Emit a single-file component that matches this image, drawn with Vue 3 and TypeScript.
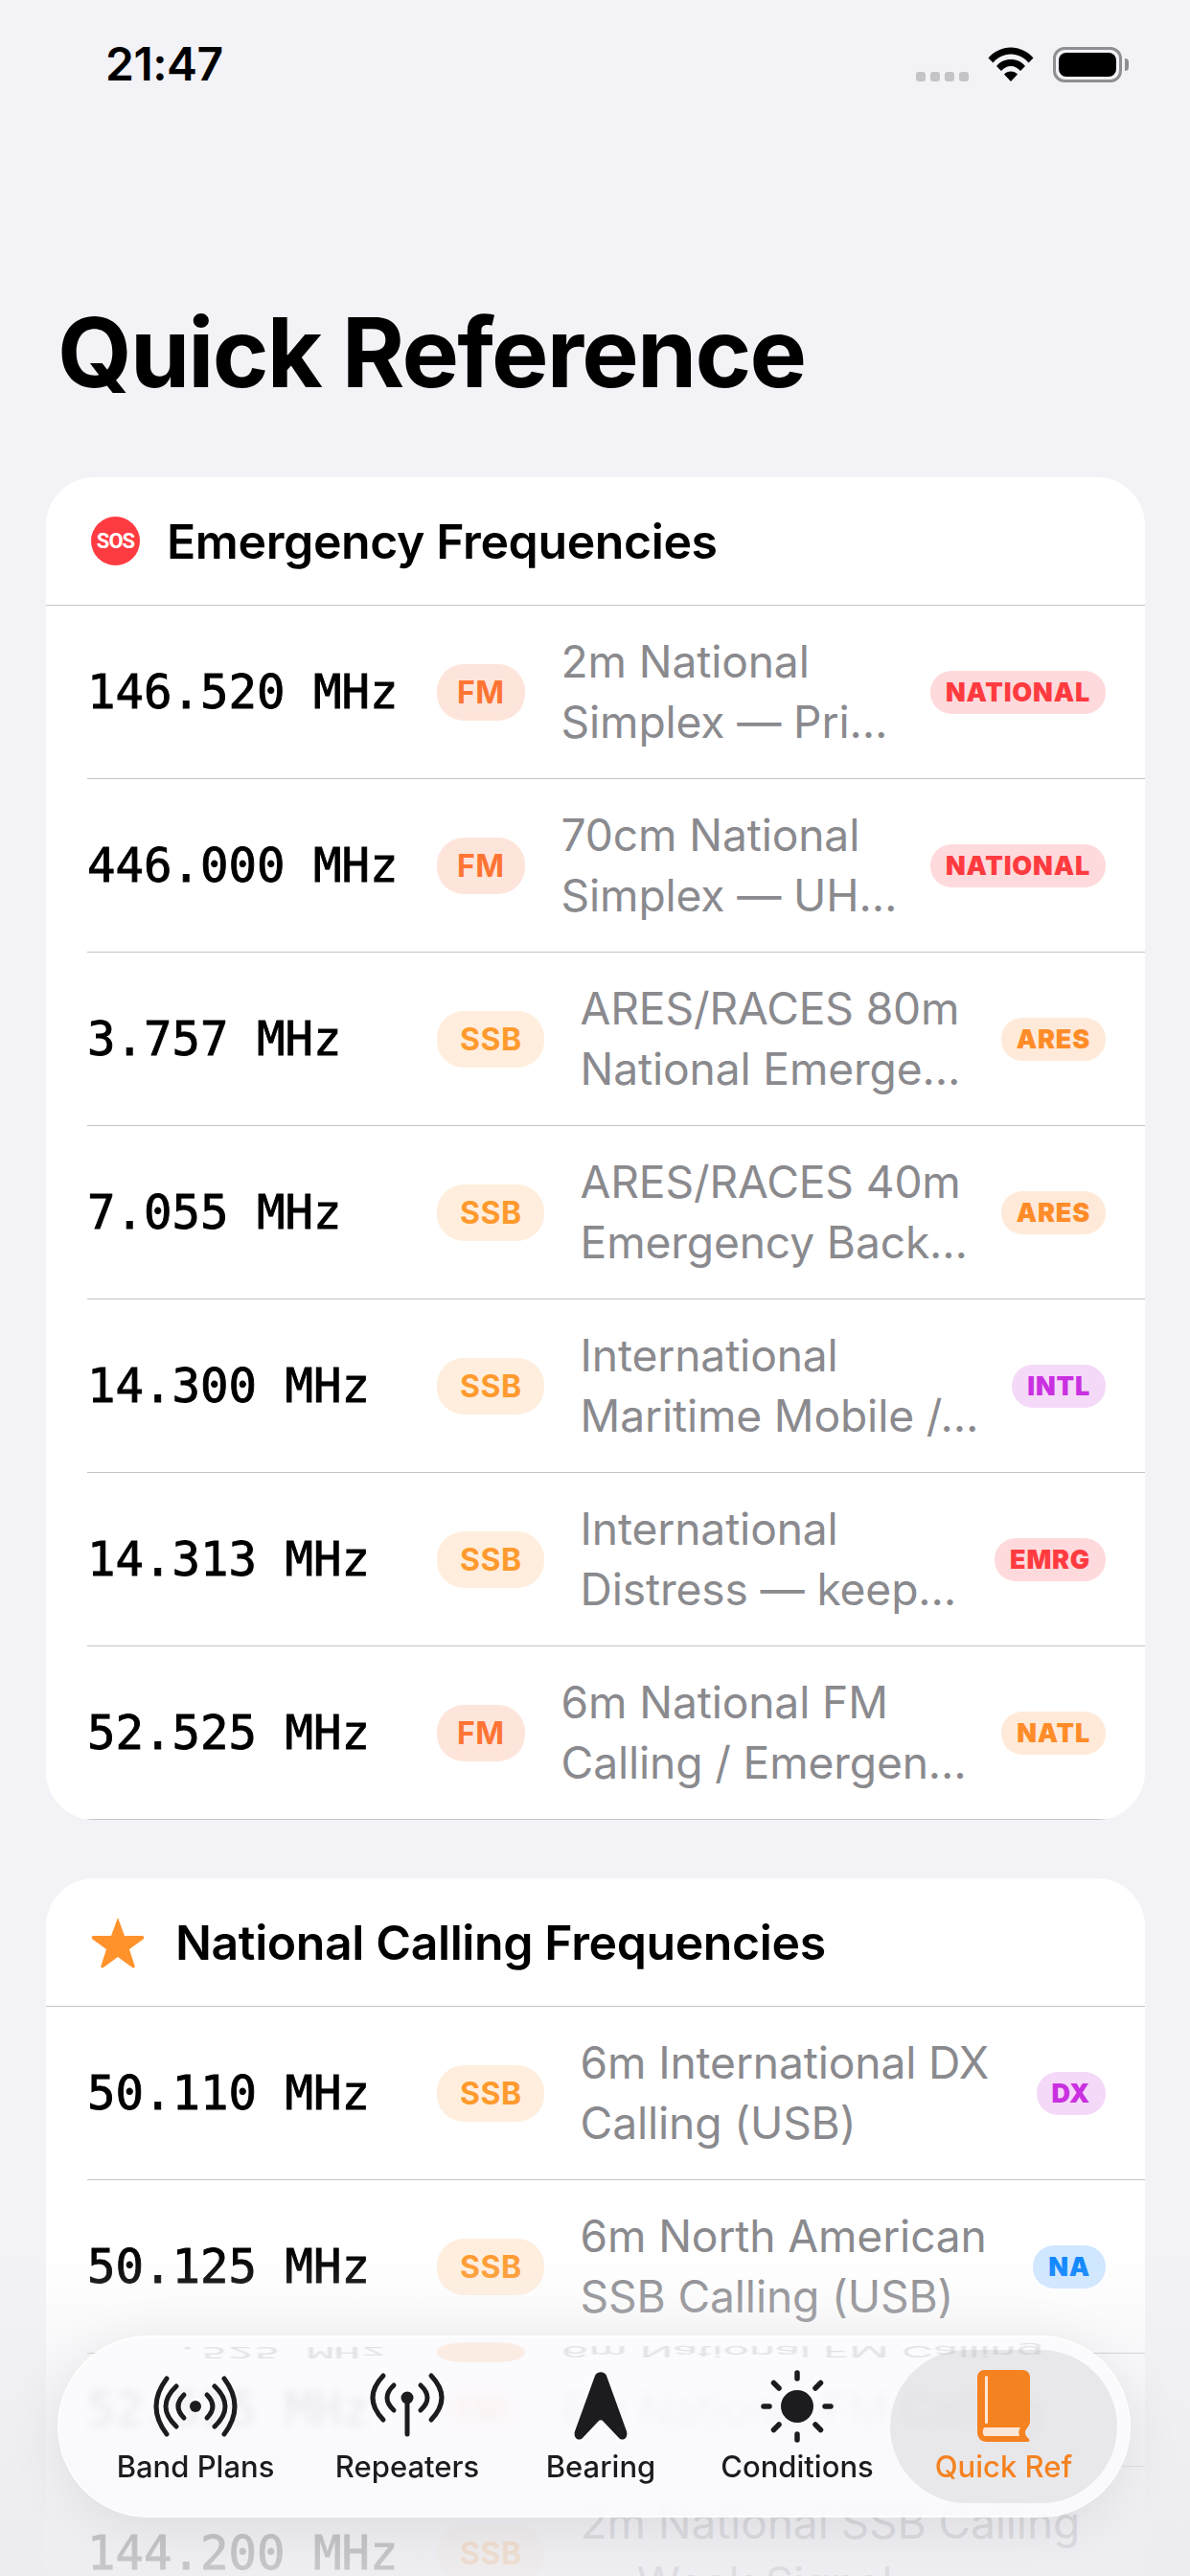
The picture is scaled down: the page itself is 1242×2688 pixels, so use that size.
<script setup lang="ts">
interface Row {
  freq: string
  mode: 'FM' | 'SSB'
  lines: string[]
  tag?: string
  tone?: string
}

interface Section {
  title: string
  rows: Row[]
}

const sections: Section[] = [
  {
    title: 'Emergency Frequencies',
    rows: [
      { freq: '146.520 MHz', mode: 'FM', lines: ['2m National', 'Simplex — Pri…'], tag: 'NATIONAL', tone: 'red' },
      { freq: '446.000 MHz', mode: 'FM', lines: ['70cm National', 'Simplex — UH…'], tag: 'NATIONAL', tone: 'red' },
      { freq: '3.757 MHz', mode: 'SSB', lines: ['ARES/RACES 80m', 'National Emerge…'], tag: 'ARES', tone: 'orange' },
      { freq: '7.055 MHz', mode: 'SSB', lines: ['ARES/RACES 40m', 'Emergency Back…'], tag: 'ARES', tone: 'orange' },
      { freq: '14.300 MHz', mode: 'SSB', lines: ['International', 'Maritime Mobile /…'], tag: 'INTL', tone: 'purple' },
      { freq: '14.313 MHz', mode: 'SSB', lines: ['International', 'Distress — keep…'], tag: 'EMRG', tone: 'red' },
      { freq: '52.525 MHz', mode: 'FM', lines: ['6m National FM', 'Calling / Emergen…'], tag: 'NATL', tone: 'orange' },
    ],
  },
  {
    title: 'National Calling Frequencies',
    rows: [
      { freq: '50.110 MHz', mode: 'SSB', lines: ['6m International DX', 'Calling (USB)'], tag: 'DX', tone: 'purple' },
      { freq: '50.125 MHz', mode: 'SSB', lines: ['6m North American', 'SSB Calling (USB)'], tag: 'NA', tone: 'blue' },
      { freq: '52.525 MHz', mode: 'FM', lines: ['6m National FM Calling'] },
      { freq: '144.200 MHz', mode: 'SSB', lines: ['2m National SSB Calling', '— Weak Signal'] },
    ],
  },
]

const tabs = ['Band Plans', 'Repeaters', 'Bearing', 'Conditions', 'Quick Ref']
</script>

<template>
  <div class="screen">
    <header class="status">
      <span class="clock">21:47</span>
      <div class="status-icons">
        <div class="dots"><i></i><i></i><i></i><i></i></div>
        <svg class="wifi" width="48" height="36" viewBox="0 0 48 36">
          <path d="M0.500 11.500C6.500 4.500 15 0.500 24 0.500C33 0.500 41.500 4.500 47.500 11.500L42.500 16.500C38 11 31.500 7.500 24 7.500C16.500 7.500 10 11 5.500 16.500Z" />
          <path d="M9 20C12.500 15.500 18 13 24 13C30 13 35.500 15.500 39 20L34 25C31.500 22 28 20 24 20C20 20 16.500 22 14 25Z" />
          <path d="M17 28.500C18.800 26.500 21.200 25.500 24 25.500C26.800 25.500 29.200 26.500 31 28.500L24 36Z" />
        </svg>
        <div class="battery"><div class="battery-fill"></div></div>
      </div>
    </header>

    <h1 class="title">Quick Reference</h1>

    <section v-for="(section, s) in sections" :key="section.title" class="card">
      <div class="card-head">
        <div v-if="s === 0" class="sos">SOS</div>
        <svg v-else class="star" width="56" height="54" viewBox="0 0 56 54">
          <path d="M28 1L35 20H53C55.500 20 56 22 54.500 23.500L40 34L45.500 51C46 53.500 44.500 54 43 53L28 42L13 53C11.500 54 10 53.500 10.500 51L16 34L1.500 23.500C0 22 0.500 20 3 20H21Z" />
        </svg>
        <h2>{{ section.title }}</h2>
      </div>
      <div v-for="row in section.rows" :key="row.freq + row.lines[0]" class="row">
        <span class="freq">{{ row.freq }}</span>
        <span class="mode" :class="row.mode.toLowerCase()">{{ row.mode }}</span>
        <div class="desc">
          <div v-for="line in row.lines" :key="line">{{ line }}</div>
        </div>
        <span v-if="row.tag" class="tag" :class="row.tone">{{ row.tag }}</span>
      </div>
    </section>

    <div class="fade"></div>

    <nav class="tabbar">
      <div class="mirror">
        <span class="mirror-freq">.525 MHz</span>
        <span class="mirror-mode"></span>
        <span class="mirror-desc">6m National FM Calling</span>
      </div>
      <div v-for="(tab, i) in tabs" :key="tab" class="tab" :class="{ active: i === 4 }">
        <svg v-if="i === 0" class="icon" width="88" height="76" viewBox="0 0 88 76" fill="none" stroke="#1c1c1e" stroke-width="5" stroke-linecap="round">
          <circle cx="44" cy="38" r="6" fill="#1c1c1e" stroke="none" />
          <path d="M32 26Q20 38 32 50M56 26Q68 38 56 50" />
          <path d="M24 17Q2 38 24 59M64 17Q86 38 64 59" />
          <path d="M14 9Q-8 38 14 67M74 9Q96 38 74 67" />
        </svg>
        <svg v-else-if="i === 1" class="icon" width="76" height="76" viewBox="0 0 76 76" fill="none" stroke="#1c1c1e" stroke-width="5" stroke-linecap="round">
          <circle cx="38" cy="29" r="6.500" fill="#1c1c1e" stroke="none" />
          <path d="M38 31V67" />
          <path d="M24 16Q10 29 24 42M52 16Q66 29 52 42" />
          <path d="M13 6Q-9 29 13 52M63 6Q85 29 63 52" />
        </svg>
        <svg v-else-if="i === 2" class="icon" width="56" height="76" viewBox="0 0 56 76">
          <path fill="#1c1c1e" d="M22 6C24 1 32 1 34 6L55 64C57 71 51 75 47 71L30 53C29 52 27 52 26 53L9 71C5 75 -1 71 1 64Z" />
        </svg>
        <svg v-else-if="i === 3" class="icon" width="76" height="76" viewBox="0 0 76 76" fill="none" stroke="#1c1c1e" stroke-width="5.500" stroke-linecap="round">
          <circle cx="38" cy="38" r="17" fill="#1c1c1e" stroke="none" />
          <path d="M38 3V9M38 67V73M3 38H9M67 38H73M13.500 13.500L19 19M57 57L62.500 62.500M13.500 62.500L19 57M57 19L62.500 13.500" />
        </svg>
        <svg v-else class="icon" width="58" height="76" viewBox="0 0 56 76">
          <path fill="#f58220" d="M8 0H47C52 0 55 3 55 8V54C55 57 53 59 51 62C49 65 50 68 53 71C55 73 55 74 54 74.500C53 75 52 75 50 75H10C4 75 0 71 0 65V8C0 3 3 0 8 0Z" />
          <path fill="#fbe6d6" d="M8 60H45C43 63 43 66 44 69H8C5 69 5 60 8 60Z" />
          <rect x="8" y="6" width="3" height="50" rx="1.500" fill="#fbe6d6" />
        </svg>
        <span class="tab-label">{{ tab }}</span>
      </div>
    </nav>
  </div>
</template>

<style scoped>
.screen {
  position: relative;
  width: 1242px;
  height: 2688px;
  overflow: hidden;
  background: #f2f2f7;
  font-family: Inter, "Noto Sans", sans-serif;
  color: #000;
}

.status {
  height: 134px;
  padding: 0 71px 0 110px;
  display: flex;
  justify-content: space-between;
  box-sizing: border-box;
}

.clock {
  margin-top: 38px;
  font-size: 48px;
  line-height: 58px;
  font-weight: 600;
  letter-spacing: -0.5px;
}

.status-icons {
  display: flex;
  align-items: flex-end;
  height: 86px;
  gap: 20px;
}

.dots {
  display: flex;
  gap: 5px;
  margin-bottom: 1px;
}

.dots i {
  width: 10px;
  height: 10px;
  border-radius: 3px;
  background: #c4c4c8;
}

.wifi {
  fill: #000;
  margin-bottom: 1px;
}

.battery {
  position: relative;
  width: 72px;
  height: 37px;
  border: 3px solid #8e8e93;
  border-radius: 12px;
  box-sizing: border-box;
  padding: 3px;
}

.battery::after {
  content: "";
  position: absolute;
  right: -10px;
  top: 9px;
  width: 4px;
  height: 13px;
  border-radius: 0 4px 4px 0;
  background: #8e8e93;
}

.battery-fill {
  height: 100%;
  border-radius: 8px;
  background: #000;
}

.title {
  margin: 174px 0 70px 60px;
  font-size: 100px;
  line-height: 120px;
  font-weight: 700;
  letter-spacing: -1.8px;
}

.card {
  margin: 0 47px 61px 48px;
  background: #fff;
  border-radius: 50px;
  overflow: hidden;
}

.card-head {
  height: 134px;
  display: flex;
  align-items: center;
  padding-left: 47px;
  border-bottom: 1px solid #c4c4c6;
  box-sizing: border-box;
}

.card-head h2 {
  margin: 0;
  font-size: 50px;
  font-weight: 600;
  letter-spacing: -0.4px;
}

.sos {
  width: 51px;
  height: 51px;
  margin-right: 28px;
  border-radius: 50%;
  background: #ff3b42;
  color: #fff;
  font-family: Roboto, sans-serif;
  font-size: 22px;
  font-weight: 700;
  letter-spacing: -1px;
  line-height: 51px;
  text-align: center;
}

.star {
  fill: #ff922b;
  margin-right: 32px;
}

.row {
  display: flex;
  align-items: center;
  min-height: 118px;
  margin-left: 43px;
  padding: 27px 41px 27px 0;
  border-bottom: 1px solid #c4c4c6;
  box-sizing: border-box;
}

.freq {
  width: 365px;
  flex: none;
  font-family: "DejaVu Sans Mono", monospace;
  font-size: 49px;
  -webkit-text-stroke: 0.9px #000;
  white-space: nowrap;
}

.mode {
  flex: none;
  height: 59px;
  margin-right: 38px;
  border-radius: 28px;
  font-size: 32px;
  font-weight: 700;
  letter-spacing: 0.5px;
  line-height: 59px;
}

.mode.ssb {
  padding: 0 23px 0 24px;
  background: #ffeedd;
  color: #ff9a2e;
}

.mode.fm {
  padding: 0 21px;
  background: #fee5db;
  color: #ff7433;
}

.desc {
  flex: 1;
  min-width: 0;
  font-size: 46.2px;
  letter-spacing: -0.15px;
  line-height: 63px;
  color: #8a8a8e;
  white-space: nowrap;
}

.tag {
  flex: none;
  margin-left: 24px;
  height: 45px;
  padding: 0 16px;
  border-radius: 22px;
  font-size: 27px;
  font-weight: 900;
  line-height: 45px;
  letter-spacing: 0.8px;
}

.tag.red {
  background: #ffdadc;
  color: #ff3b40;
}

.tag.orange {
  background: #ffead9;
  color: #ff8c28;
}

.tag.purple {
  background: #f5d9f8;
  color: #c930e0;
}

.tag.blue {
  background: #cfe7ff;
  color: #0a84ff;
}

.fade {
  position: absolute;
  left: 0;
  right: 0;
  bottom: 0;
  height: 340px;
  background: linear-gradient(to bottom, rgba(240, 240, 245, 0), rgba(237, 237, 242, 0.55) 45%, rgba(235, 235, 240, 0.82) 85%, rgba(235, 235, 240, 0.85));
  pointer-events: none;
}

.tabbar {
  position: absolute;
  left: 62px;
  top: 2439px;
  width: 1116px;
  height: 186px;
  padding: 13px 12px 13px 15px;
  box-sizing: border-box;
  display: grid;
  grid-template-columns: 254px 188px 216px 194px 237px;
  border-radius: 93px;
  background: rgba(252, 252, 254, 0.86);
  backdrop-filter: blur(4px);
  box-shadow: 0 0 0 2px rgba(255, 255, 255, 0.9), 0 8px 60px rgba(0, 0, 0, 0.09);
  overflow: hidden;
}

.mirror {
  position: absolute;
  left: 120px;
  top: -14px;
  display: flex;
  align-items: center;
  font-size: 46px;
  color: #8e8e93;
  opacity: 0.22;
  transform: scaleY(-0.35);
  filter: blur(1px);
  white-space: nowrap;
}

.mirror-freq {
  width: 274px;
  font-family: "DejaVu Sans Mono", monospace;
}

.mirror-mode {
  width: 92px;
  height: 59px;
  margin-right: 38px;
  border-radius: 28px;
  background: #ffb98a;
}

.tab {
  position: relative;
  display: flex;
  flex-direction: column;
  align-items: center;
  justify-content: flex-start;
  padding-top: 21px;
  border-radius: 80px;
  color: #1c1c1e;
}

.tab.active {
  background: rgba(118, 118, 128, 0.14);
  color: #f58220;
}

.icon {
  display: block;
  height: 76px;
  overflow: visible;
}

.tab-label {
  margin-top: 6px;
  font-size: 31px;
  line-height: 38px;
  font-weight: 500;
  white-space: nowrap;
}
</style>

<style>
html,
body {
  margin: 0;
  background: #f2f2f7;
}
</style>
